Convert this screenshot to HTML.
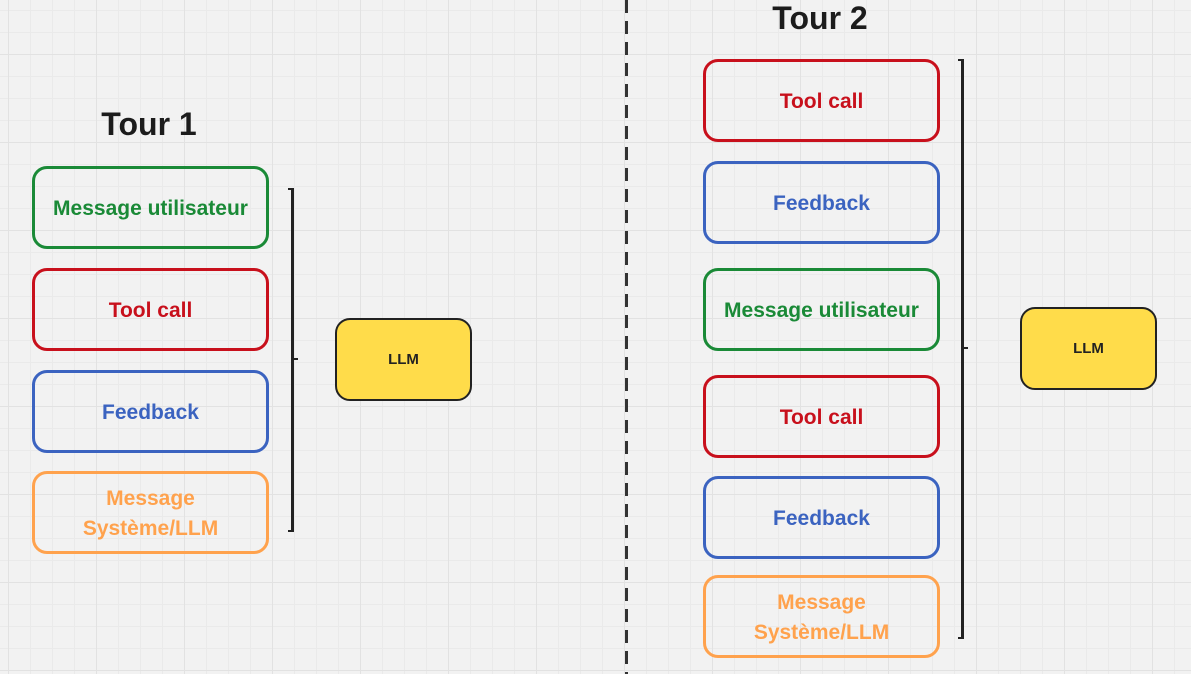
<!DOCTYPE html>
<html><head><meta charset="utf-8"><style>
html,body{margin:0;padding:0}
body{width:1191px;height:674px;overflow:hidden;position:relative;background-color:#f2f2f2;
background-image:
linear-gradient(to right,#e2e2e2 1px,transparent 1px),
linear-gradient(to bottom,#e2e2e2 1px,transparent 1px),
linear-gradient(to right,#eaeaea 1px,transparent 1px),
linear-gradient(to bottom,#eaeaea 1px,transparent 1px);
background-size:88px 88px,88px 88px,22px 22px,22px 22px;
background-position:8px 0,0 54px,8px 0,0 10px;
font-family:"Liberation Sans","Noto Sans CJK JP",sans-serif;}
.b{position:absolute;box-sizing:border-box;width:237px;height:83px;border:3px solid;border-radius:15px;display:flex;align-items:center;justify-content:center;text-align:center;font-weight:bold;font-size:21px;line-height:30px;padding-top:2px}
.g{border-color:#1a8a37;color:#1a8a37}
.r{border-color:#c8101c;color:#c8101c}
.u{border-color:#3b63c0;color:#3b63c0}
.o{border-color:#ffa24d;color:#ffa24d}
.llm{position:absolute;box-sizing:border-box;width:137px;height:83px;border:2px solid #222;border-radius:15px;background:#ffdc4a;display:flex;align-items:center;justify-content:center;font-weight:bold;font-size:15px;color:#222}
.t{position:absolute;font-weight:bold;font-size:32px;color:#1c1c1c;transform:translateX(-50%)}
.br{position:absolute;width:3px;background:#222}
</style></head><body>
<div class="t" style="left:149px;top:106px">Tour 1</div>
<div class="t" style="left:820px;top:0px">Tour 2</div>
<div class="b g" style="left:32px;top:166px">Message utilisateur</div>
<div class="b r" style="left:32px;top:268px">Tool call</div>
<div class="b u" style="left:32px;top:370px">Feedback</div>
<div class="b o" style="left:32px;top:471px">Message<br>Système/LLM</div>
<div class="br" style="left:291px;top:188px;height:344px"></div>
<div class="br" style="left:288px;top:188px;width:6px;height:2px"></div>
<div class="br" style="left:288px;top:530px;width:6px;height:2px"></div>
<div class="br" style="left:292px;top:358px;width:6px;height:2px"></div>
<div class="llm" style="left:335px;top:318px">LLM</div>
<div style="position:absolute;left:625px;top:0;width:3px;height:674px;background:repeating-linear-gradient(to bottom,#333 0 13px,transparent 13px 21px)"></div>
<div class="b r" style="left:703px;top:59px">Tool call</div>
<div class="b u" style="left:703px;top:161px">Feedback</div>
<div class="b g" style="left:703px;top:268px">Message utilisateur</div>
<div class="b r" style="left:703px;top:375px">Tool call</div>
<div class="b u" style="left:703px;top:476px">Feedback</div>
<div class="b o" style="left:703px;top:575px">Message<br>Système/LLM</div>
<div class="br" style="left:961px;top:59px;height:580px"></div>
<div class="br" style="left:958px;top:59px;width:6px;height:2px"></div>
<div class="br" style="left:958px;top:637px;width:6px;height:2px"></div>
<div class="br" style="left:962px;top:347px;width:6px;height:2px"></div>
<div class="llm" style="left:1020px;top:307px">LLM</div>
</body></html>
